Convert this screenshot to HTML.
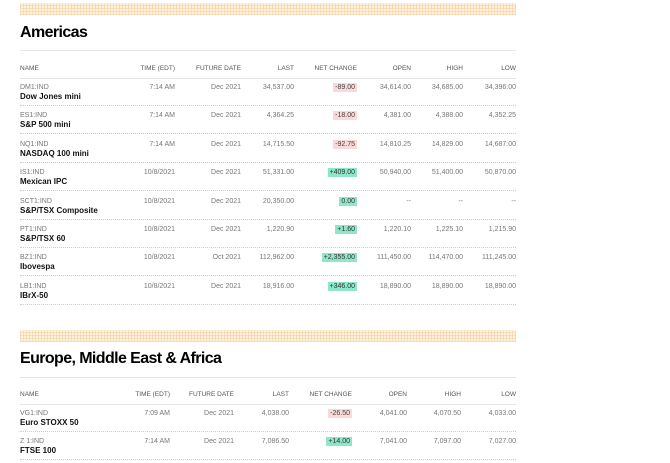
<!DOCTYPE html><html><head><style>
*{margin:0;padding:0;box-sizing:border-box}
body{width:670px;height:463px;background:#fff;font-family:"Liberation Sans",sans-serif;position:relative;overflow:hidden}
.s{position:absolute;left:20px;width:496px;height:12px;background-color:#fdf1e0;background-image:repeating-linear-gradient(90deg,rgba(245,200,140,.45) 0 1px,transparent 1px 3px),repeating-linear-gradient(0deg,rgba(245,200,140,.45) 0 1px,transparent 1px 3px)}
h2{position:absolute;left:20px;font-size:16px;font-weight:bold;letter-spacing:-0.6px;color:#000}
.l{position:absolute;left:20px;width:496px;height:1px;background:#e6e6e6}
.d{position:absolute;left:20px;width:496px;height:0;border-top:1px dotted #ccc}
.t{position:absolute;font-size:7px;color:#777;white-space:nowrap;text-align:right}
.h{position:absolute;font-size:6.5px;color:#555;white-space:nowrap}
.n{position:absolute;font-size:8px;font-weight:bold;color:#111;left:20px;white-space:nowrap}
.c{position:absolute;font-size:7px;color:#777;left:20px}
.r{background:#fbd9d9;color:#444;padding:1px 2px}
.g{background:#8ee8c8;color:#333;padding:1px 2px}
</style></head><body>
<div class="s" style="top:3px"></div>
<h2 style="top:24px">Americas</h2>
<div class="l" style="top:50px"></div>
<div class="l" style="top:78px"></div>
<div class="s" style="top:330px"></div>
<h2 style="top:350px">Europe, Middle East &amp; Africa</h2>
<div class="l" style="top:377px"></div>
<div class="l" style="top:404px"></div>
<div id="a"></div>
<script>
function tbl(hy,rows,cols,first){
 let o='';const H=['TIME (EDT)','FUTURE DATE','LAST','NET CHANGE','OPEN','HIGH','LOW'];
 o+=`<div class="h" style="left:20px;top:${hy}px">NAME</div>`;
 H.forEach((h,i)=>o+=`<div class="h" style="right:${670-cols[i]}px;top:${hy}px">${h}</div>`);
 rows.forEach((r,k)=>{const y=first+k*28.4;
  o+=`<div class="c" style="top:${y-4}px">${r[0]}</div><div class="n" style="top:${y+4}px">${r[1]}</div>`;
  for(let i=0;i<7;i++){let v=r[i+2];if(i==3){v=`<span class="${v[0]=='-'?'r':'g'}">${v}</span>`}
   o+=`<div class="t" style="right:${670-cols[i]}px;top:${y-4}px">${v}</div>`}
  o+=`<div class="d" style="top:${y+17}px"></div>`;});
 return o;}
let A=[['DM1:IND','Dow Jones mini','7:14 AM','Dec 2021','34,537.00','-89.00','34,614.00','34,685.00','34,396.00'],
['ES1:IND','S&amp;P 500 mini','7:14 AM','Dec 2021','4,364.25','-18.00','4,381.00','4,388.00','4,352.25'],
['NQ1:IND','NASDAQ 100 mini','7:14 AM','Dec 2021','14,715.50','-92.75','14,810.25','14,829.00','14,687.00'],
['IS1:IND','Mexican IPC','10/8/2021','Dec 2021','51,331.00','+409.00','50,940.00','51,400.00','50,870.00'],
['SCT1:IND','S&amp;P/TSX Composite','10/8/2021','Dec 2021','20,350.00','0.00','--','--','--'],
['PT1:IND','S&amp;P/TSX 60','10/8/2021','Dec 2021','1,220.90','+1.60','1,220.10','1,225.10','1,215.90'],
['BZ1:IND','Ibovespa','10/8/2021','Oct 2021','112,962.00','+2,355.00','111,450.00','114,470.00','111,245.00'],
['LB1:IND','IBrX-50','10/8/2021','Dec 2021','18,916.00','+346.00','18,890.00','18,890.00','18,890.00']];
let E=[['VG1:IND','Euro STOXX 50','7:09 AM','Dec 2021','4,038.00','-26.50','4,041.00','4,070.50','4,033.00'],
['Z 1:IND','FTSE 100','7:14 AM','Dec 2021','7,086.50','+14.00','7,041.00','7,097.00','7,027.00']];
document.getElementById('a').innerHTML=tbl(65,A,[175,241,294,357,411,463,516],88)+tbl(391,E,[170,234,289,352,407,461,516],414);
</script>
</body></html>
